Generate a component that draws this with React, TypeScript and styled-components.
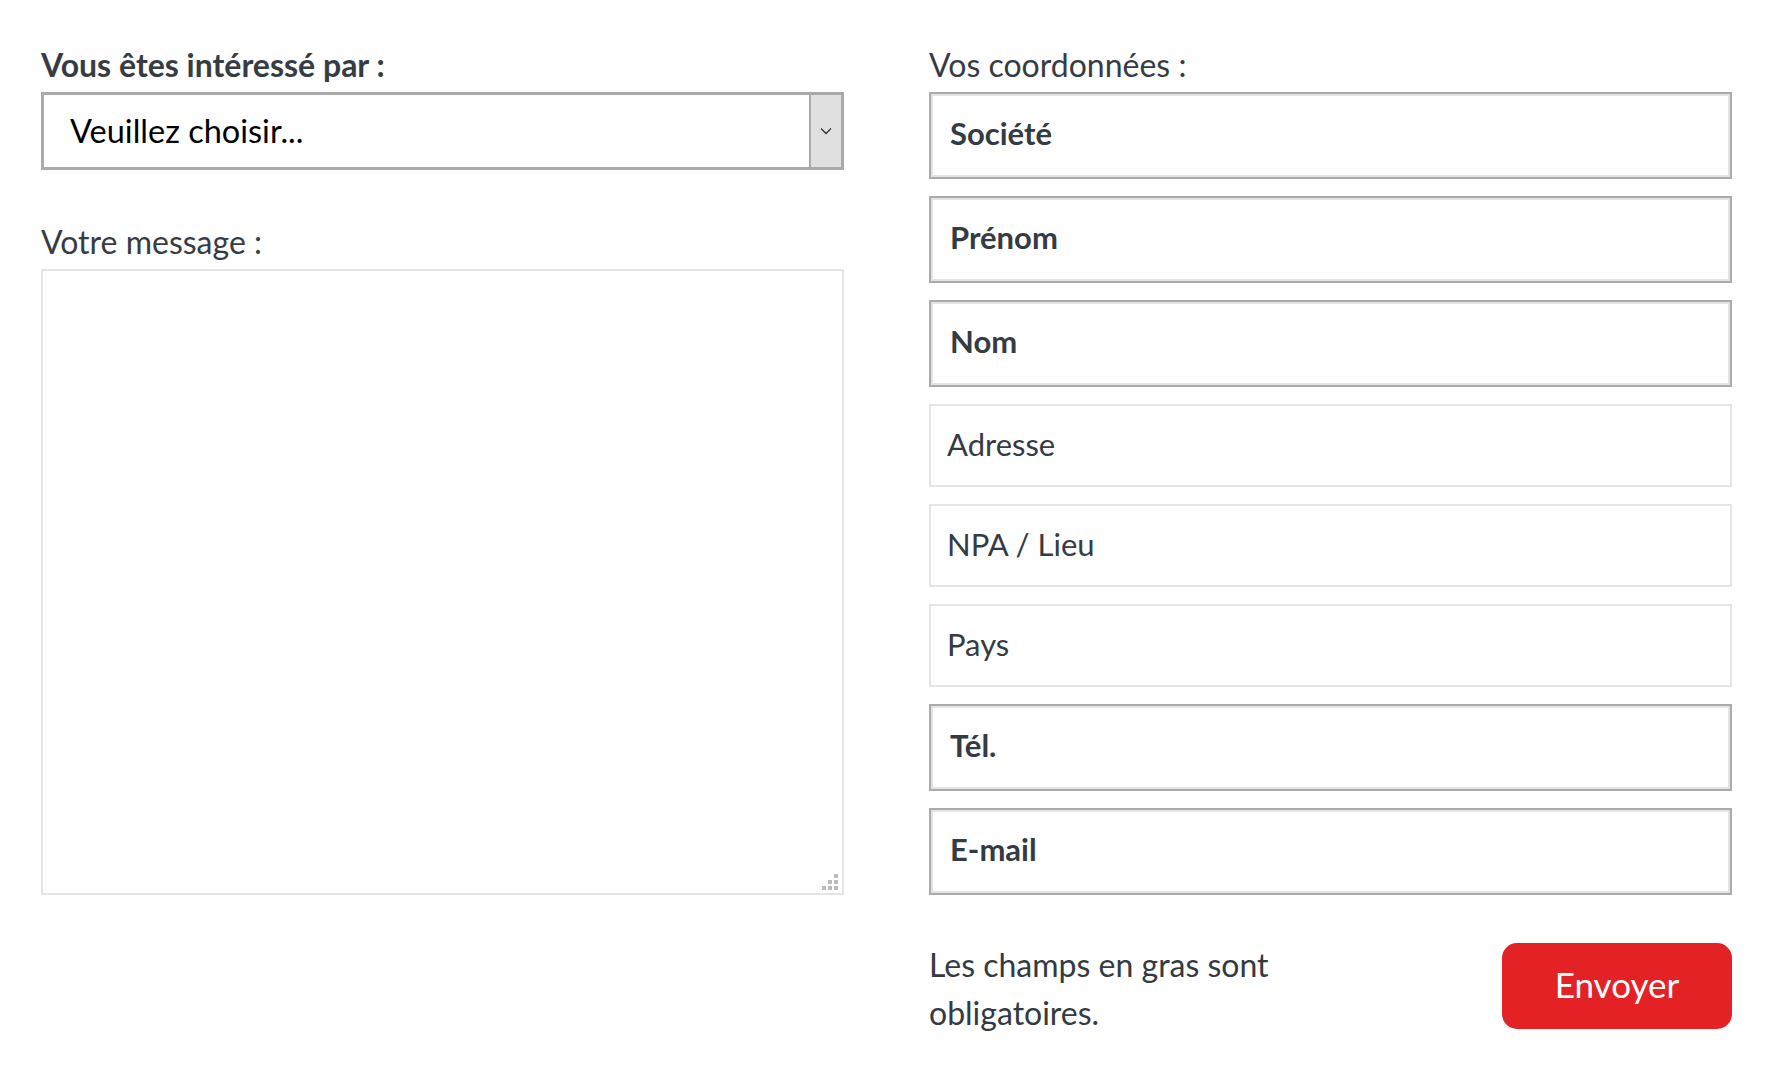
import React from "react";
import styled, { createGlobalStyle } from "styled-components";

const GlobalStyle = createGlobalStyle`
  * { box-sizing: border-box; }
  body {
    margin: 0;
    background: #ffffff;
    font-family: Lato, "Open Sans", sans-serif;
  }
`;

const Page = styled.form`
  display: grid;
  grid-template-columns: 803px 803px;
  column-gap: 85px;
  padding: 46px 44px 0 41px;
`;

const Column = styled.div`
  display: flex;
  flex-direction: column;
`;

const Label = styled.div<{ $bold?: boolean; $top?: number }>`
  font-size: 32px;
  line-height: 38px;
  font-weight: ${(p) => (p.$bold ? 700 : 400)};
  color: #363c44;
  margin-top: ${(p) => p.$top ?? 0}px;
  margin-bottom: 8px;
`;

const SelectBox = styled.div`
  position: relative;
  height: 78px;
  border: 3px solid #aaaaaa;
  display: flex;
  align-items: stretch;
  background: #fff;
`;

const SelectValue = styled.div`
  flex: 1;
  display: flex;
  align-items: center;
  padding: 0 0 2px 26px;
  font-size: 32.5px;
  color: #000;
`;

const SelectArrow = styled.div`
  width: 32px;
  background: #e0e0e0;
  border-left: 2px solid #aaaaaa;
  display: flex;
  align-items: center;
  justify-content: center;
`;

const MessageWrap = styled.div`
  position: relative;
  height: 626px;
`;

const MessageArea = styled.textarea`
  width: 100%;
  height: 100%;
  border: 2px solid #e5e5e5;
  resize: none;
  outline: none;
  padding: 12px 16px;
  font-family: Lato, sans-serif;
  font-size: 28px;
`;

const Grip = styled.svg`
  position: absolute;
  right: 6px;
  bottom: 5px;
`;

const Fields = styled.div`
  display: flex;
  flex-direction: column;
  gap: 17px;
`;

const Field = styled.input<{ $required?: boolean }>`
  width: 100%;
  height: ${(p) => (p.$required ? 87 : 83)}px;
  border: 2px solid ${(p) => (p.$required ? "#aaaaaa" : "#e5e5e5")};
  box-shadow: ${(p) => (p.$required ? "inset 0 0 0 2px #e3e3e3" : "none")};
  padding: ${(p) => (p.$required ? "0 0 6px 19px" : "0 0 4px 16px")};
  font-family: Lato, sans-serif;
  font-size: 31px;
  font-weight: ${(p) => (p.$required ? 700 : 400)};
  color: #333a42;
  outline: none;
  background: #fff;

  &::placeholder {
    color: #343b43;
    opacity: 1;
  }
`;

const Footer = styled.div`
  margin-top: 46px;
  display: flex;
  justify-content: space-between;
  align-items: flex-start;
`;

const Note = styled.p`
  margin: 0;
  width: 50%;
  font-size: 32px;
  line-height: 48px;
  color: #333a42;
`;

const SendButton = styled.button`
  width: 230px;
  height: 86px;
  margin-top: 2px;
  border: none;
  border-radius: 15px;
  background: #e42226;
  color: #ffffff;
  font-family: Lato, sans-serif;
  font-size: 35px;
  padding-bottom: 6px;
  cursor: pointer;
`;

const fields = [
  { name: "Société", required: true },
  { name: "Prénom", required: true },
  { name: "Nom", required: true },
  { name: "Adresse", required: false },
  { name: "NPA / Lieu", required: false },
  { name: "Pays", required: false },
  { name: "Tél.", required: true },
  { name: "E-mail", required: true },
];

export default function App() {
  return (
    <>
      <GlobalStyle />
      <Page onSubmit={(e) => e.preventDefault()}>
        <Column>
          <Label $bold>Vous êtes intéressé par :</Label>
          <SelectBox>
            <SelectValue>Veuillez choisir...</SelectValue>
            <SelectArrow>
              <svg width="12" height="8" viewBox="0 0 12 8">
                <path d="M1 1.5 L6 6.5 L11 1.5" fill="none" stroke="#333" strokeWidth="1.3" />
              </svg>
            </SelectArrow>
          </SelectBox>
          <Label $top={53}>Votre message :</Label>
          <MessageWrap>
            <MessageArea />
            <Grip width="16" height="16" viewBox="0 0 16 16">
              <rect x="12" y="0" width="4" height="4" fill="#bbbbbb" />
              <rect x="6" y="6" width="4" height="4" fill="#bbbbbb" />
              <rect x="12" y="6" width="4" height="4" fill="#bbbbbb" />
              <rect x="0" y="12" width="4" height="4" fill="#bbbbbb" />
              <rect x="6" y="12" width="4" height="4" fill="#bbbbbb" />
              <rect x="12" y="12" width="4" height="4" fill="#bbbbbb" />
            </Grip>
          </MessageWrap>
        </Column>
        <Column>
          <Label>Vos coordonnées :</Label>
          <Fields>
            {fields.map((f) => (
              <Field key={f.name} placeholder={f.name} $required={f.required} />
            ))}
          </Fields>
          <Footer>
            <Note>Les champs en gras sont obligatoires.</Note>
            <SendButton type="submit">Envoyer</SendButton>
          </Footer>
        </Column>
      </Page>
    </>
  );
}
